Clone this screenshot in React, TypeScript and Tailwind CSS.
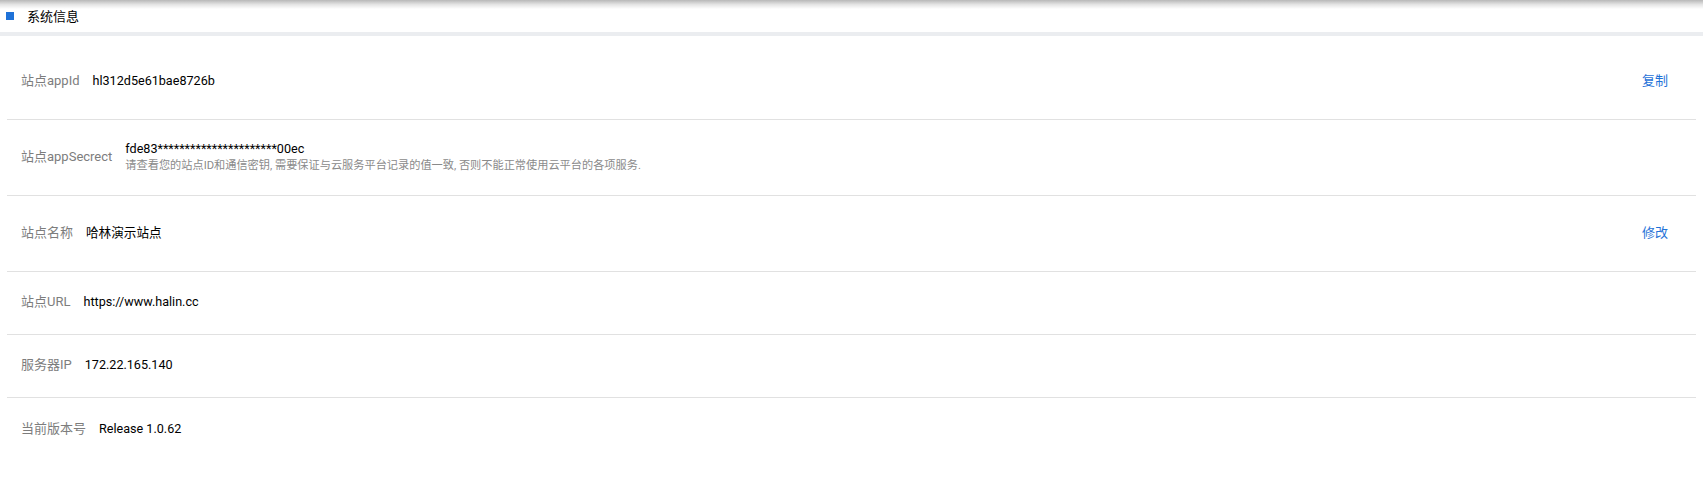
const rows = [
  { label: "站点appId", value: "hl312d5e61bae8726b", action: "复制", h: "h-[76px]" },
  {
    label: "站点appSecrect",
    value: "fde83**********************00ec",
    hint: "请查看您的站点ID和通信密钥, 需要保证与云服务平台记录的值一致, 否则不能正常使用云平台的各项服务.",
    h: "h-[76px]",
  },
  { label: "站点名称", value: "哈林演示站点", action: "修改", h: "h-[76px]" },
  { label: "站点URL", value: "https://www.halin.cc", h: "h-[63px]" },
  { label: "服务器IP", value: "172.22.165.140", h: "h-[63px]" },
  { label: "当前版本号", value: "Release 1.0.62", h: "h-[63px]" },
];

export default function App() {
  return (
    <div className="w-[1703px] h-[498px] bg-white font-['Roboto','Noto_Sans_CJK_SC',sans-serif] overflow-hidden">
      {/* Header */}
      <div className="relative h-8 flex items-center">
        <div className="absolute top-0 left-0 right-0 h-[9px] bg-gradient-to-b from-[#b8b8b8] via-[#e4e4e4] to-white" />
        <span className="ml-[6px] w-2 h-2 bg-[#1f72d8]" />
        <span className="ml-[13px] mt-[1px] text-[13px] text-black leading-none">系统信息</span>
      </div>
      <div className="h-1 bg-[#ebedf0]" />

      {/* Rows */}
      <div className="mx-[7px] pt-[8px]">
        {rows.map((r, i) => (
          <div
            key={r.label}
            className={`${r.h} flex items-center pl-[14px] pr-[28px] pb-[2px] ${
              i < rows.length - 1 ? "border-b border-[#e1e1e1]" : ""
            }`}
          >
            <span className="text-[13px] text-[#7d7d7d] mr-[13px] whitespace-nowrap">{r.label}</span>
            <div className="flex-1 flex flex-col">
              <span className="text-[12.6px] text-black leading-[18px]">{r.value}</span>
              {r.hint && (
                <span className="text-[11.2px] text-[#8a8a8a] leading-[16px]">{r.hint}</span>
              )}
            </div>
            {r.action && (
              <a className="text-[13px] text-[#1f72d8] cursor-pointer">{r.action}</a>
            )}
          </div>
        ))}
      </div>
    </div>
  );
}
